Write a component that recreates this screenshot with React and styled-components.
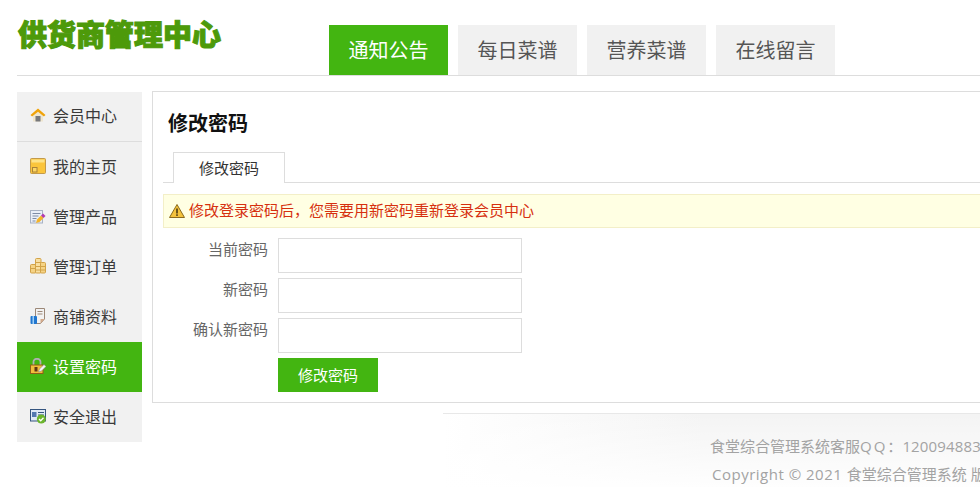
import React from 'react';
import styled, { createGlobalStyle } from 'styled-components';

const GlobalStyle = createGlobalStyle`
  html, body {
    margin: 0;
    padding: 0;
    overflow: hidden;
    background: #fff;
  }
  * {
    box-sizing: border-box;
  }
`;

const Page = styled.div`
  width: 1400px;
  padding-left: 17px;
  font-family: 'Open Sans', 'Noto Sans CJK SC', sans-serif;
  color: #333;
`;

const Header = styled.div`
  display: flex;
  height: 76px;
  border-bottom: 1px solid #ddd;
`;

const Logo = styled.div`
  width: 312px;
  padding: 15px 0 0 1px;
  font-size: 29px;
  line-height: 40px;
  font-weight: 900;
  color: #4d9a0a;
  -webkit-text-stroke: 1.1px #4d9a0a;
  white-space: nowrap;
`;

const Nav = styled.div`
  display: flex;
  gap: 10px;
  padding-top: 25px;
`;

const NavItem = styled.div`
  width: 119px;
  height: 50px;
  line-height: 52px;
  text-align: center;
  font-size: 20px;
  background: ${(p) => (p.$active ? '#43b511' : '#f1f1f1')};
  color: ${(p) => (p.$active ? '#fff' : '#555')};
`;

const Body = styled.div`
  display: flex;
  gap: 10px;
  margin-top: 15px;
  align-items: flex-start;
`;

const Sidebar = styled.div`
  width: 125px;
  margin-top: 1px;
  background: #f1f1f1;
`;

const SideItem = styled.div`
  display: flex;
  align-items: center;
  gap: 7px;
  height: 50px;
  padding: 0 0 ${(p) => (p.$line ? '3px' : '2px')} 13px;
  font-size: 16px;
  background: ${(p) => (p.$active ? '#43b511' : 'transparent')};
  color: ${(p) => (p.$active ? '#fff' : '#3a3a3a')};
  border-bottom: ${(p) => (p.$line ? '1px solid #ddd' : 'none')};
`;

const Column = styled.div`
  flex: 1;
`;

const Panel = styled.div`
  height: 312px;
  border: 1px solid #ddd;
  padding: 0 10px;
`;

const Title = styled.h2`
  margin: 0;
  padding: 18px 0 0 5px;
  height: 60px;
  font-size: 20px;
  line-height: 28px;
  font-weight: 700;
  color: #111;
`;

const TabBar = styled.div`
  height: 31px;
  border-bottom: 1px solid #ddd;
  padding-left: 10px;
`;

const Tab = styled.div`
  width: 112px;
  height: 31px;
  line-height: 31px;
  text-align: center;
  font-size: 15px;
  background: #fff;
  border: 1px solid #ddd;
  border-bottom: none;
`;

const Alert = styled.div`
  display: flex;
  align-items: center;
  gap: 4px;
  height: 34px;
  margin-top: 11px;
  padding: 0 0 1px 5px;
  background: #ffffe3;
  border: 1px solid #f3efc8;
  font-size: 15px;
  line-height: 20px;
  color: #d6300f;
`;

const AlertText = styled.span`
  padding-bottom: 2px;
`;

const Form = styled.div`
  display: flex;
  flex-direction: column;
  gap: 5px;
  margin-top: 10px;
`;

const Row = styled.div`
  display: flex;
  gap: 10px;
`;

const Label = styled.label`
  width: 105px;
  text-align: right;
  font-size: 15px;
  line-height: 23px;
  color: #666;
`;

const Input = styled.input`
  width: 244px;
  height: 35px;
  padding: 0 8px;
  background: #fff;
  border: 1px solid #ddd;
  outline: none;
`;

const Button = styled.button`
  width: 100px;
  height: 34px;
  padding: 0 0 2px;
  border: none;
  background: #43b511;
  color: #fff;
  font-family: inherit;
  font-size: 15px;
`;

const Footer = styled.div`
  height: 74px;
  margin: 10px 0 0 291px;
  padding: 18px 0 0 267px;
  border-top: 1px solid #e8e8e8;
  background:
    linear-gradient(to bottom, rgba(255, 255, 255, 0), #fff 110%),
    linear-gradient(to right, #fff 0, #f4f4f4 260px);
  font-size: 15px;
  line-height: 28px;
  color: #a3a3a3;
  white-space: nowrap;
`;

const CopyLine = styled.div`
  padding-left: 2px;
`;

const Latin = styled.span`
  letter-spacing: ${(p) => p.$track};
`;

const HomeIcon = () => (
  <svg width="16" height="16" viewBox="0 0 16 16">
    <path d="M3 8.500L8 4.500l5 4V14.500H3z" fill="#efe6cf" />
    <rect x="5.500" y="9" width="5" height="5.500" fill="#77787b" />
    <path d="M0.500 8L8 1.500 15.500 8l-1.600 1.600L8 4.800 2.100 9.600z" fill="#f0a30a" />
  </svg>
);

const NoteIcon = () => (
  <svg width="16" height="16" viewBox="0 0 16 16">
    <rect x="0.500" y="0.500" width="15" height="15" rx="1" fill="#fbc53c" stroke="#c39a4a" />
    <rect x="1.500" y="1.500" width="13" height="3" fill="#fde38a" />
    <rect x="2.500" y="9.500" width="4.500" height="4.500" fill="#fdd765" stroke="#a9823a" />
  </svg>
);

const EditIcon = () => (
  <svg width="16" height="16" viewBox="0 0 16 16">
    <rect x="0.500" y="2.500" width="12" height="12.500" fill="#e9eef8" stroke="#a8b2c4" />
    <path d="M2.500 5.500h8M2.500 8h6M2.500 10.500h4M2.500 13h3" stroke="#7e8ca6" />
    <path d="M6 15l1-3.500 4-4 2.500 2.500-4 4z" fill="#f3b32a" />
    <path d="M11 7.500L13 5.500l2.500 2.500-2 2z" fill="#b23bb0" />
  </svg>
);

const CoinsIcon = () => (
  <svg width="16" height="16" viewBox="0 0 16 16">
    <rect x="0.500" y="6.500" width="5.500" height="8.500" rx="1" fill="#f5d385" stroke="#d2a349" />
    <rect x="5.500" y="0.500" width="5.500" height="14.500" rx="1" fill="#f9e0a2" stroke="#d2a349" />
    <rect x="10.500" y="4.500" width="5" height="10.500" rx="1" fill="#f5d385" stroke="#d2a349" />
    <path d="M0.500 10.500h5M5.500 4.500h5.500M5.500 8.500h5.500M5.500 12h5.500M11 8.500h4.500M11 12h4.500" stroke="#d2a349" />
  </svg>
);

const ShopIcon = () => (
  <svg width="16" height="16" viewBox="0 0 16 16">
    <path d="M5.500 0.500h9v10.500l-4 4.500H5.500z" fill="#f2f2f2" stroke="#9c8878" />
    <path d="M7.500 3.500h5M7.500 6h5" stroke="#9c8878" />
    <path d="M14.500 11l-4 4.500v-4.500z" fill="#d4a98a" />
    <rect x="0.500" y="8" width="6.500" height="8" rx="1" fill="#2176cf" />
    <rect x="2.500" y="8" width="1.500" height="8" fill="#9fd0f7" />
  </svg>
);

const LockIcon = () => (
  <svg width="16" height="16" viewBox="0 0 16 16">
    <path d="M3.500 7V3.800a3.500 3 0 0 1 7 0V7" fill="none" stroke="#b0b0b0" strokeWidth="1.800" />
    <rect x="0.500" y="7" width="12.500" height="8.500" fill="#f1bd3c" stroke="#8f5f18" />
    <rect x="4.500" y="9" width="3" height="4.500" fill="#5f3610" />
    <path d="M8.500 14l1-3 4.500-4.500 2 2-4.500 4.500z" fill="#f4f4f4" stroke="#777" strokeWidth="0.500" />
  </svg>
);

const ExitIcon = () => (
  <svg width="16" height="16" viewBox="0 0 16 16">
    <rect x="0.500" y="1.500" width="15" height="11.500" fill="#dfe9f7" stroke="#35557f" />
    <rect x="2" y="4" width="4.500" height="5" fill="#5278b0" />
    <path d="M8 4.500h6M8 7h6" stroke="#35557f" />
    <circle cx="11.300" cy="11" r="4.500" fill="#6cb52d" />
    <path d="M9 11l1.700 1.700 2.800-3" fill="none" stroke="#fff" strokeWidth="1.300" />
  </svg>
);

const WarnIcon = () => (
  <svg width="16" height="16" viewBox="0 0 16 16">
    <path d="M8 1.500L15.500 14.500H.5z" fill="#f3c23c" stroke="#8a6a1e" strokeLinejoin="round" />
    <rect x="7.200" y="5.500" width="1.600" height="5" fill="#4a3a12" />
    <rect x="7.200" y="11.300" width="1.600" height="1.600" fill="#4a3a12" />
  </svg>
);

const menu = [
  { label: '会员中心', icon: <HomeIcon />, line: true },
  { label: '我的主页', icon: <NoteIcon /> },
  { label: '管理产品', icon: <EditIcon /> },
  { label: '管理订单', icon: <CoinsIcon /> },
  { label: '商铺资料', icon: <ShopIcon /> },
  { label: '设置密码', icon: <LockIcon />, active: true },
  { label: '安全退出', icon: <ExitIcon /> },
];

const navs = ['通知公告', '每日菜谱', '营养菜谱', '在线留言'];
const fields = ['当前密码', '新密码', '确认新密码'];

export default function App() {
  return (
    <Page>
      <GlobalStyle />
      <Header>
        <Logo>供货商管理中心</Logo>
        <Nav>
          {navs.map((n, i) => (
            <NavItem key={n} $active={i === 0}>{n}</NavItem>
          ))}
        </Nav>
      </Header>
      <Body>
        <Sidebar>
          {menu.map((m) => (
            <SideItem key={m.label} $active={m.active} $line={m.line}>
              {m.icon}
              {m.label}
            </SideItem>
          ))}
        </Sidebar>
        <Column>
          <Panel>
            <Title>修改密码</Title>
            <TabBar>
              <Tab>修改密码</Tab>
            </TabBar>
            <Alert>
              <WarnIcon />
              <AlertText>修改登录密码后，您需要用新密码重新登录会员中心</AlertText>
            </Alert>
            <Form>
              {fields.map((f) => (
                <Row key={f}>
                  <Label>{f}</Label>
                  <Input type="password" />
                </Row>
              ))}
              <Row>
                <Label />
                <Button>修改密码</Button>
              </Row>
            </Form>
          </Panel>
          <Footer>
            <div>食堂综合管理系统客服<Latin $track="2px">QQ</Latin>：<Latin $track="0.15px">1200948839</Latin></div>
            <CopyLine><Latin $track="0.5px">Copyright © 2021 </Latin>食堂综合管理系统 版权所有</CopyLine>
          </Footer>
        </Column>
      </Body>
    </Page>
  );
}
